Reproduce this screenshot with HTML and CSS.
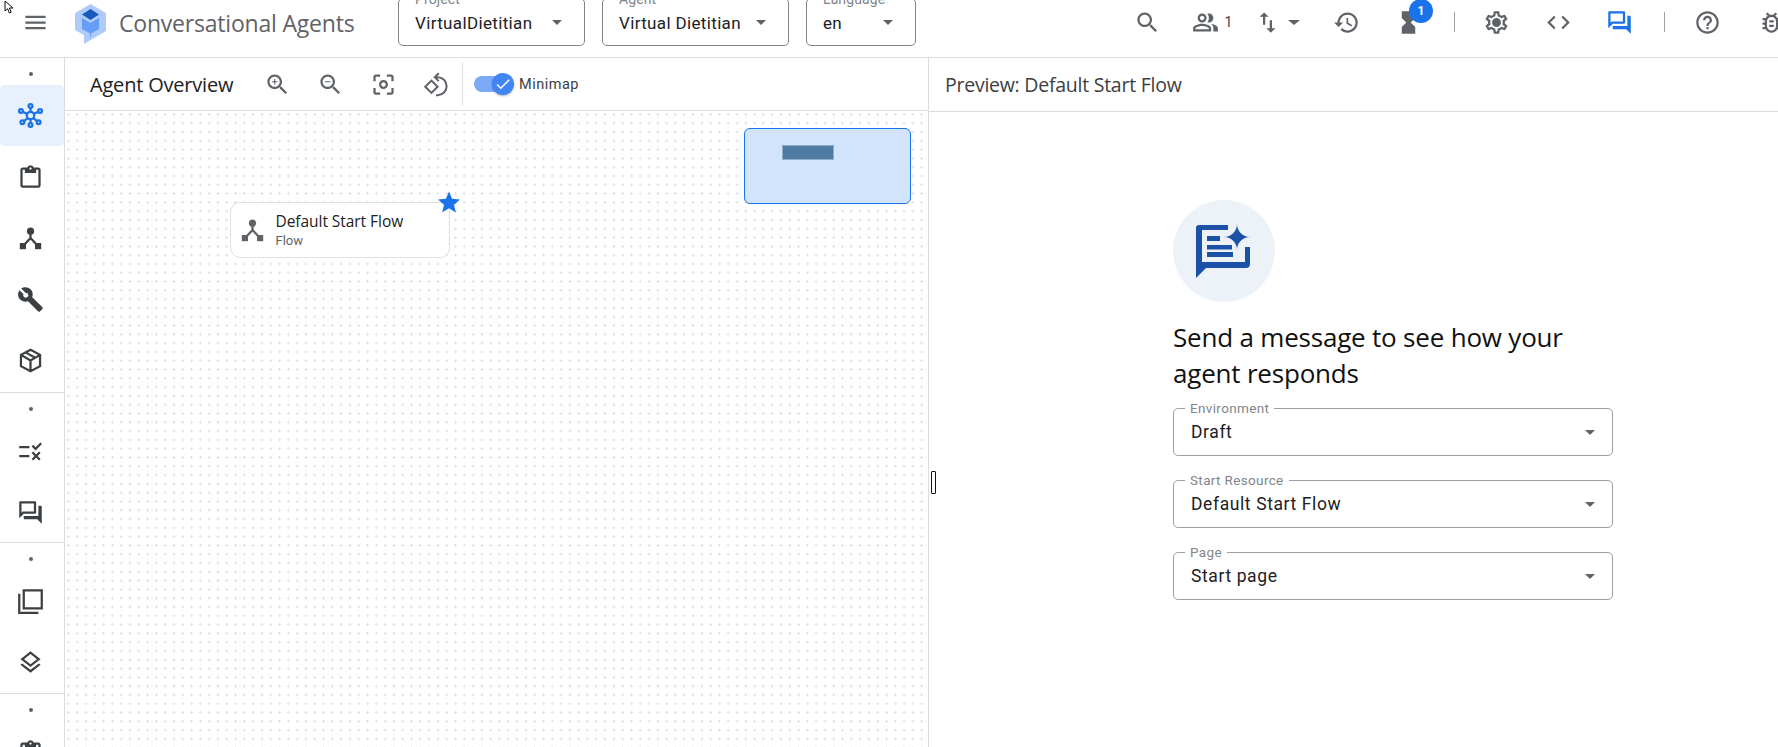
FILE: index.html
```html
<!DOCTYPE html>
<html lang="en">
<head>
    <meta charset="UTF-8">
    <title>Conversational Agents</title>
    <link rel="stylesheet" href="styles.css">
</head>
<body>
    <svg class="sprite" width="0" height="0">
        <symbol id="i-forum" viewBox="0 0 24 24"><path d="M15 4v7H5.170L4 12.170V4h11m1-2H3c-.55 0-1 .45-1 1v14l4-4h10c.55 0 1-.45 1-1V3c0-.55-.45-1-1-1zm5 4h-2v9H6v2c0 .55.45 1 1 1h11l4 4V7c0-.55-.45-1-1-1z"/></symbol>
        <symbol id="i-flow" viewBox="0 0 24 24"><circle cx="12" cy="5.500" r="3.200"/><rect x="2.500" y="16" width="5.500" height="5.500"/><rect x="16" y="16" width="5.500" height="5.500"/><path d="M12 7v4.500L6 18M12 11.500l6 6.500" fill="none" stroke="currentColor" stroke-width="2"/></symbol>
        <symbol id="i-clip" viewBox="0 0 24 24"><path d="M19 3h-4.180C14.400 1.840 13.300 1 12 1c-1.300 0-2.400.84-2.820 2H5c-1.100 0-2 .9-2 2v14c0 1.100.9 2 2 2h14c1.100 0 2-.9 2-2V5c0-1.100-.9-2-2-2zm-7 0c.55 0 1 .45 1 1s-.45 1-1 1-1-.45-1-1 .45-1 1-1zm7 16H5V5h2v3h10V5h2v14z"/></symbol>
    </svg>

    <svg class="cursor" width="12" height="14" viewBox="0 0 12 14"><path d="M1 1v10l2.600-2.300L5.400 13l1.800-.8-1.800-4.200H9z" fill="#fff" stroke="#111" stroke-width="1"/></svg>

    <header class="topbar">
        <svg class="icon menu-icon" viewBox="0 0 24 24"><path d="M3 18h18v-2H3v2zm0-5h18v-2H3v2zm0-7v2h18V6H3z"/></svg>
        <svg class="logo" width="31" height="40" viewBox="0 0 31 40">
            <path d="M15.500 0L31 9v18L9 40v-9l-9-5V9z" fill="#aecbfa"/>
            <path d="M7 14l8.500 5L24 14v11l-8 4.500V33l-1-.5v-3L7 25z" fill="#669df6"/>
            <path d="M15.500 5L24 10.500 15.500 16 7 10.500z" fill="#185abc"/>
        </svg>
        <span class="product">Conversational Agents</span>

        <div class="picker picker-project">
            <span class="picker-label">Project</span>
            <span class="picker-value">VirtualDietitian</span>
            <span class="caret"></span>
        </div>
        <div class="picker picker-agent">
            <span class="picker-label">Agent</span>
            <span class="picker-value">Virtual Dietitian</span>
            <span class="caret"></span>
        </div>
        <div class="picker picker-lang">
            <span class="picker-label">Language</span>
            <span class="picker-value">en</span>
            <span class="caret"></span>
        </div>

        <div class="tools">
            <svg class="icon" viewBox="0 0 24 24"><path d="M15.500 14h-.79l-.28-.27C15.410 12.590 16 11.110 16 9.500 16 5.910 13.090 3 9.500 3S3 5.910 3 9.500 5.910 16 9.500 16c1.610 0 3.090-.59 4.230-1.570l.27.280v.79l5 4.990L20.490 19l-4.990-5zm-6 0C7.010 14 5 11.990 5 9.500S7.010 5 9.500 5 14 7.010 14 9.500 11.990 14 9.500 14z"/></svg>
            <svg class="icon tool-people" viewBox="0 0 24 24"><path d="M16.670 13.130C18.040 14.060 19 15.320 19 17v3h4v-3c0-2.180-3.570-3.470-6.330-3.870zM15 12c2.210 0 4-1.790 4-4s-1.790-4-4-4c-.47 0-.91.100-1.330.240C14.500 5.270 15 6.580 15 8s-.5 2.730-1.330 3.760c.42.140.86.240 1.330.240zM9 12c2.210 0 4-1.790 4-4s-1.790-4-4-4-4 1.790-4 4 1.790 4 4 4zm0-6c1.100 0 2 .9 2 2s-.9 2-2 2-2-.9-2-2 .9-2 2-2zM9 13c-2.670 0-8 1.340-8 4v3h16v-3c0-2.660-5.330-4-8-4zm6 5H3v-.99C3.200 16.290 6.300 15 9 15s5.800 1.290 6 2v1z"/></svg>
            <span class="people-count">1</span>
            <svg class="icon tool-swap" viewBox="0 0 24 24"><path d="M16 17.010V10h-2v7.010h-3L15 21l4-3.990h-3zM9 3L5 6.990h3V14h2V6.990h3L9 3z"/></svg>
            <span class="caret tool-caret"></span>
            <svg class="icon tool-history" viewBox="0 0 24 24"><path d="M13 3c-4.970 0-9 4.030-9 9H1l3.890 3.890.07.140L9 12H6c0-3.870 3.130-7 7-7s7 3.130 7 7-3.130 7-7 7c-1.930 0-3.680-.79-4.940-2.060l-1.420 1.420C8.270 19.990 10.510 21 13 21c4.970 0 9-4.030 9-9s-4.030-9-9-9zm-1 5v5l4.280 2.540.72-1.210-3.500-2.080V8H12z"/></svg>
            <div class="hourglass">
                <svg class="icon" viewBox="0 0 24 24"><path d="M6 2v6h.01L6 8.010 10 12l-4 4 .01.01H6V22h12v-5.990h-.01L18 16l-4-4 4-3.990-.01-.01H18V2H6z"/></svg>
                <span class="badge">1</span>
            </div>
            <span class="tool-sep sep-a"></span>
            <svg class="icon tool-gear" viewBox="0 0 24 24"><path d="M19.430 12.980c.04-.32.07-.64.07-.98 0-.34-.03-.66-.07-.98l2.110-1.650c.19-.15.24-.42.12-.64l-2-3.460c-.09-.16-.26-.25-.44-.25-.06 0-.12.01-.17.03l-2.490 1c-.52-.4-1.080-.73-1.690-.98l-.38-2.650C14.460 2.180 14.250 2 14 2h-4c-.25 0-.46.18-.49.42l-.38 2.650c-.61.25-1.170.59-1.690.98l-2.490-1c-.06-.02-.12-.03-.18-.03-.17 0-.34.09-.43.25l-2 3.460c-.13.22-.07.49.12.64l2.110 1.650c-.04.32-.07.65-.07.98 0 .33.03.66.07.98l-2.110 1.650c-.19.15-.24.42-.12.64l2 3.460c.09.16.26.25.44.25.06 0 .12-.01.17-.03l2.490-1c.52.4 1.080.73 1.690.98l.38 2.650c.03.24.24.42.49.42h4c.25 0 .46-.18.49-.42l.38-2.650c.61-.25 1.170-.59 1.690-.98l2.490 1c.06.02.12.03.18.03.17 0 .34-.09.43-.25l2-3.460c.12-.22.07-.49-.12-.64l-2.110-1.650zm-1.980-1.710c.04.31.05.52.05.73 0 .21-.02.43-.05.73l-.14 1.130.89.7 1.080.84-.7 1.210-1.270-.51-1.040-.42-.9.68c-.43.32-.84.56-1.250.73l-1.060.43-.16 1.130-.2 1.350h-1.400l-.19-1.350-.16-1.130-1.060-.43c-.43-.18-.83-.41-1.230-.71l-.91-.7-1.060.43-1.270.51-.7-1.210 1.080-.84.89-.7-.14-1.130c-.03-.31-.05-.54-.05-.74s.02-.43.05-.73l.14-1.130-.89-.7-1.080-.84.7-1.210 1.270.51 1.040.42.9-.68c.43-.32.84-.56 1.250-.73l1.060-.43.16-1.130.2-1.350h1.390l.19 1.350.16 1.130 1.060.43c.43.18.83.41 1.230.71l.91.7 1.060-.43 1.270-.51.7 1.210-1.070.85-.89.7.14 1.130zM12 8c-2.210 0-4 1.790-4 4s1.790 4 4 4 4-1.790 4-4-1.790-4-4-4z"/></svg>
            <svg class="icon tool-code" viewBox="0 0 24 24"><path d="M9.400 16.600L4.800 12l4.600-4.600L8 6l-6 6 6 6 1.400-1.400zm5.200 0l4.600-4.600-4.600-4.600L16 6l6 6-6 6-1.400-1.400z"/></svg>
            <svg class="icon tool-forum"><use href="#i-forum"/></svg>
            <span class="tool-sep sep-b"></span>
            <svg class="icon tool-help" viewBox="0 0 24 24"><path d="M11 18h2v-2h-2v2zm1-16C6.480 2 2 6.480 2 12s4.480 10 10 10 10-4.480 10-10S17.520 2 12 2zm0 18c-4.410 0-8-3.590-8-8s3.590-8 8-8 8 3.590 8 8-3.590 8-8 8zm0-14c-2.210 0-4 1.790-4 4h2c0-1.100.9-2 2-2s2 .9 2 2c0 2-3 1.750-3 5h2c0-2.250 3-2.500 3-5 0-2.210-1.790-4-4-4z"/></svg>
            <svg class="icon tool-bug" viewBox="0 0 24 24"><path d="M20 8h-2.810c-.45-.78-1.070-1.450-1.820-1.960L17 4.410 15.590 3l-2.170 2.170C12.960 5.060 12.490 5 12 5s-.96.06-1.410.17L8.410 3 7 4.410l1.620 1.630C7.880 6.550 7.260 7.220 6.810 8H4v2h2.090c-.05.33-.09.66-.09 1v1H4v2h2v1c0 .34.04.67.09 1H4v2h2.810c1.040 1.790 2.970 3 5.190 3s4.150-1.210 5.190-3H20v-2h-2.090c.05-.33.09-.66.09-1v-1h2v-2h-2v-1c0-.34-.04-.67-.09-1H20V8zm-4 7c0 2.210-1.790 4-4 4s-4-1.790-4-4v-4c0-2.210 1.790-4 4-4s4 1.790 4 4v4zM10 14h4v2h-4zm0-4h4v2h-4z"/></svg>
        </div>
    </header>

    <div class="main">
        <nav class="rail">
            <div class="rail-group rail-first">
                <span class="rail-dot"></span>
                <div class="rail-item active">
                    <svg class="icon" viewBox="0 0 24 24" fill="none" stroke="currentColor" stroke-width="2"><circle cx="12" cy="12" r="3.300"/><circle cx="12" cy="3.500" r="1.700"/><circle cx="12" cy="20.500" r="1.700"/><circle cx="3.500" cy="8" r="1.700"/><circle cx="20.500" cy="8" r="1.700"/><circle cx="4.800" cy="18" r="1.700"/><circle cx="19.200" cy="18" r="1.700"/><path d="M12 5.200v3.500M12 15.300v3.500M5 8.800l4 1.700M19 8.800l-4 1.700M6.200 17l3.200-2.700M17.800 17l-3.200-2.700"/></svg>
                </div>
                <div class="rail-item"><svg class="icon"><use href="#i-clip"/></svg></div>
                <div class="rail-item"><svg class="icon"><use href="#i-flow"/></svg></div>
                <div class="rail-item">
                    <svg class="icon" viewBox="0 0 24 24"><path d="M22.610 18.990l-9.080-9.080c.93-2.340.45-5.100-1.440-7C9.790.61 6.210.4 3.660 2.260L7.500 6.110 6.080 7.520 2.250 3.690C.39 6.230.6 9.820 2.900 12.110c1.860 1.860 4.570 2.350 6.890 1.480l9.110 9.110c.39.39 1.020.39 1.410 0l2.300-2.300c.4-.38.4-1.010 0-1.410z"/><circle cx="7.800" cy="8.200" r="2.200" fill="#fff"/></svg>
                </div>
                <div class="rail-item">
                    <svg class="icon" viewBox="0 0 24 24" fill="none" stroke="currentColor" stroke-width="2"><path d="M12 2.500L20.500 7v10L12 21.500 3.500 17V7zM3.500 7l8.500 5 8.500-5M12 12v9.500M8 5l8.500 4.800"/></svg>
                </div>
            </div>
            <div class="rail-group rail-mid">
                <span class="rail-dot"></span>
                <div class="rail-item">
                    <svg class="icon" viewBox="0 0 24 24"><path d="M16.540 11L13 7.460l1.410-1.410 2.120 2.120 4.240-4.240 1.410 1.410L16.540 11zM11 7H2v2h9V7zm10 6.410L19.590 12 17 14.590 14.410 12 13 13.410 15.590 16 13 18.590 14.410 20 17 17.410 19.590 20 21 18.590 18.410 16 21 13.410zM11 15H2v2h9v-2z"/></svg>
                </div>
                <div class="rail-item"><svg class="icon"><use href="#i-forum"/></svg></div>
            </div>
            <div class="rail-group">
                <span class="rail-dot"></span>
                <div class="rail-item">
                    <svg class="icon" viewBox="0 0 24 24"><path d="M3 5H1v18h18v-2H3V5zm20-4H5v18h18V1zm-2 16H7V3h14v14z"/></svg>
                </div>
                <div class="rail-item">
                    <svg class="icon" viewBox="0 0 24 24"><path d="M11.990 18.540l-7.370-5.730L3 14.070l9 7 9-7-1.630-1.270zM12 16l7.360-5.730L21 9l-9-7-9 7 1.630 1.270L12 16zm0-11.470L17.740 9 12 13.470 6.260 9 12 4.530z"/></svg>
                </div>
            </div>
            <div class="rail-group rail-last">
                <span class="rail-dot"></span>
                <div class="rail-item"><svg class="icon"><use href="#i-clip"/></svg></div>
            </div>
        </nav>

        <section class="overview">
            <div class="toolbar">
                <h1 class="overview-title">Agent Overview</h1>
                <svg class="icon tb-icon tb-first" viewBox="0 0 24 24"><path d="M15.500 14h-.79l-.28-.27C15.410 12.590 16 11.110 16 9.500 16 5.910 13.090 3 9.500 3S3 5.910 3 9.500 5.910 16 9.500 16c1.610 0 3.090-.59 4.230-1.570l.27.280v.79l5 4.990L20.490 19l-4.990-5zm-6 0C7.010 14 5 11.990 5 9.500S7.010 5 9.500 5 14 7.010 14 9.500 11.990 14 9.500 14zM12 10h-2v2H9v-2H7V9h2V7h1v2h2v1z"/></svg>
                <svg class="icon tb-icon" viewBox="0 0 24 24"><path d="M15.500 14h-.79l-.28-.27C15.410 12.590 16 11.110 16 9.500 16 5.910 13.090 3 9.500 3S3 5.910 3 9.500 5.910 16 9.500 16c1.610 0 3.090-.59 4.230-1.570l.27.280v.79l5 4.990L20.490 19l-4.990-5zm-6 0C7.010 14 5 11.990 5 9.500S7.010 5 9.500 5 14 7.010 14 9.500 11.990 14 9.500 14zM7 9h5v1H7z"/></svg>
                <svg class="icon tb-icon" viewBox="0 0 24 24"><path d="M5 15H3v4c0 1.100.9 2 2 2h4v-2H5v-4zM5 5h4V3H5c-1.100 0-2 .9-2 2v4h2V5zm14-2h-4v2h4v4h2V5c0-1.100-.9-2-2-2zm0 16h-4v2h4c1.100 0 2-.9 2-2v-4h-2v4zM12 8c-2.210 0-4 1.790-4 4s1.790 4 4 4 4-1.790 4-4-1.790-4-4-4zm0 6c-1.100 0-2-.9-2-2s.9-2 2-2 2 .9 2 2-.9 2-2 2z"/></svg>
                <svg class="icon tb-icon" viewBox="0 0 24 24" fill="none" stroke="currentColor" stroke-width="1.800"><path d="M2 14l5.500-5.500L13 14l-5.500 5.500zM10.500 5.500H13a8 8 0 1 1 0 16h-1.500"/><path d="M14 2l-3.500 3.500L14 9"/></svg>
                <span class="toolbar-sep"></span>
                <div class="toggle"><span class="toggle-track"></span><span class="toggle-thumb"><svg width="18" height="18" viewBox="0 0 24 24"><path d="M9 16.200L4.800 12l-1.400 1.400L9 19 21 7l-1.400-1.400z" fill="#fff"/></svg></span></div>
                <span class="toggle-label">Minimap</span>
            </div>
            <div class="canvas">
                <div class="minimap"><span class="minimap-node"></span></div>
                <div class="flow-node">
                    <svg class="icon node-icon"><use href="#i-flow"/></svg>
                    <div class="node-text">
                        <span class="node-title">Default Start Flow</span>
                        <span class="node-sub">Flow</span>
                    </div>
                    <svg class="node-star" width="24" height="24" viewBox="0 0 24 24"><path d="M12 1.500l3.100 7.300 7.900.7-6 5.200 1.800 7.800L12 18.300l-6.800 4.200L7 14.700l-6-5.200 7.900-.7z" fill="#1a73e8"/></svg>
                </div>
            </div>
        </section>

        <section class="preview">
            <span class="drag-handle"></span>
            <div class="preview-head">Preview: Default Start Flow</div>
            <div class="preview-body">
                <div class="hero">
                    <svg width="56" height="58" viewBox="0 -3 56 58">
                        <path d="M0 3Q0 0 3 0H32V5H6V37H49V22H54V39Q54 43 50 43H10L0 53Z" fill="#1b52a8"/>
                        <path d="M11 11H24V16H11ZM11 20H36V24.500H11ZM11 27H37V32H11Z" fill="#1b52a8"/>
                        <path d="M41-2C42 7 46 11 55 12 46 13 42 17 41 26 40 17 36 13 27 12 36 11 40 7 41-2Z" fill="#1b52a8" stroke="#edf2f8" stroke-width=".8"/>
                    </svg>
                </div>
                <h2 class="hero-text">Send a message to see how your agent responds</h2>
                <div class="field">
                    <span class="field-label">Environment</span>
                    <span class="field-value">Draft</span>
                    <span class="caret"></span>
                </div>
                <div class="field">
                    <span class="field-label">Start Resource</span>
                    <span class="field-value">Default Start Flow</span>
                    <span class="caret"></span>
                </div>
                <div class="field">
                    <span class="field-label">Page</span>
                    <span class="field-value">Start page</span>
                    <span class="caret"></span>
                </div>
            </div>
        </section>
    </div>
</body>
</html>
```

FILE: styles.css
```css
* {
    box-sizing: border-box;
}

html, body {
    margin: 0;
    height: 747px;
    overflow: hidden;
}

body {
    font-family: 'Roboto', sans-serif;
    background: #fff;
    color: #202124;
    position: relative;
}

.sprite {
    position: absolute;
}

.cursor {
    position: absolute;
    left: 4px;
    top: 0;
    z-index: 5;
}

.icon {
    width: 27px;
    height: 27px;
    flex: none;
    fill: #5f6368;
    color: #5f6368;
    display: block;
}

.icon[fill="none"] {
    fill: none;
}

/* top bar */
.topbar {
    height: 58px;
    display: flex;
    align-items: flex-start;
    border-bottom: 1px solid #dadce0;
    width: 1778px;
    overflow: hidden;
}

.menu-icon {
    margin: 9px 0 0 22px;
}

.logo {
    flex: none;
    margin: 4px 0 0 26px;
}

.product {
    flex: none;
    width: 255px;
    margin: 8px 0 0 13px;
    font-family: 'Open Sans', sans-serif;
    font-size: 23px;
    line-height: 30px;
    letter-spacing: -0.2px;
    color: #5f6368;
}

.picker {
    position: relative;
    flex: none;
    height: 48px;
    margin-top: -2px;
    border: 1px solid #80868b;
    border-radius: 5px;
    display: flex;
    align-items: center;
    padding: 1px 0 0 16px;
}

.picker-project {
    width: 187px;
    margin-left: 24px;
}

.picker-agent {
    width: 187px;
    margin-left: 17px;
}

.picker-lang {
    width: 110px;
    margin-left: 17px;
}

.picker-label {
    position: absolute;
    left: 11px;
    top: -8px;
    padding: 0 5px;
    background: #fff;
    font-size: 14px;
    line-height: 16px;
    color: #80868b;
    letter-spacing: 0.1px;
}

.picker-value {
    font-size: 17px;
    letter-spacing: 0.35px;
    color: #202124;
}

.caret {
    flex: none;
    width: 0;
    height: 0;
    border-left: 5px solid transparent;
    border-right: 5px solid transparent;
    border-top: 5px solid #5f6368;
    margin-left: auto;
    margin-right: 22px;
}

.tools {
    display: flex;
    align-items: center;
    height: 44px;
    margin-left: 217.5px;
    flex: none;
}

.tool-people { margin-left: 31.5px; }
.tool-swap { margin-left: 19.5px; }
.tool-caret { margin: 0 0 0 6.5px; border-left-width: 6px; border-right-width: 6px; }
.tool-history { margin-left: 33.5px; }
.hourglass { margin-left: 35px; position: relative; }
.tool-gear { margin-left: 28.5px; }
.tool-code { margin-left: 35px; }
.tool-forum { margin-left: 34px; fill: #1a73e8; }
.tool-help { margin-left: 29.5px; }
.tool-bug { margin-left: 36.5px; }

.people-count {
    margin-left: 5.5px;
    font-size: 14px;
    color: #3c4043;
    width: 10px;
}

.badge {
    position: absolute;
    left: 14px;
    top: -10px;
    width: 24px;
    height: 24px;
    border-radius: 50%;
    background: #1a73e8;
    color: #fff;
    font-size: 12px;
    font-weight: 700;
    display: flex;
    align-items: center;
    justify-content: center;
}

.tool-sep {
    width: 1px;
    height: 20px;
    background: #9aa0a6;
    flex: none;
}

.sep-a { margin-left: 31.5px; }
.sep-b { margin-left: 30.5px; }

/* main area */
.main {
    display: flex;
    height: 689px;
}

.rail {
    width: 65px;
    flex: none;
    border-right: 1px solid #dadce0;
    overflow: hidden;
}

.rail-group {
    border-bottom: 1px solid #dadce0;
}

.rail-first {
    padding-bottom: 2px;
}

.rail-first .rail-dot {
    margin-bottom: 23px;
}

.rail-first .rail-item {
    padding-top: 2px;
}

.rail-mid {
    height: 150px;
}

.rail-last {
    border-bottom: 0;
}

.rail-dot {
    display: block;
    width: 4px;
    height: 4px;
    border-radius: 50%;
    background: #5f6368;
    margin: 0 auto 24px;
    position: relative;
    top: 14px;
    left: -1px;
}

.rail-item {
    height: 61px;
    display: flex;
    align-items: center;
    justify-content: center;
    border-radius: 5px;
    padding-right: 3px;
}

.rail-item .icon {
    fill: #3c4043;
    color: #3c4043;
}

.rail-item .icon[fill="none"] {
    fill: none;
}

.rail-item.active {
    background: #e8f0fe;
    padding-top: 0;
}

.rail-item.active .icon {
    color: #1a73e8;
}

.overview {
    width: 864px;
    flex: none;
    border-right: 1px solid #dadce0;
    display: flex;
    flex-direction: column;
}

.toolbar {
    height: 53px;
    flex: none;
    display: flex;
    align-items: center;
    border-bottom: 1px solid #dadce0;
    padding-left: 25px;
}

.overview-title {
    margin: 0;
    width: 149px;
    flex: none;
    font-family: 'Open Sans', sans-serif;
    font-size: 20px;
    font-weight: 400;
    letter-spacing: -0.2px;
    white-space: nowrap;
    color: #202124;
}

.tb-icon {
    margin-left: 26px;
}

.tb-first {
    margin-left: 24.5px;
}

.toolbar-sep {
    width: 1px;
    height: 44px;
    background: #e0e0e0;
    margin-left: 12.5px;
}

.toggle {
    position: relative;
    width: 40px;
    height: 24px;
    margin-left: 11px;
    flex: none;
}

.toggle-track {
    position: absolute;
    left: 0;
    top: 4px;
    width: 32px;
    height: 16px;
    border-radius: 8px;
    background: #7baaf7;
}

.toggle-thumb {
    position: absolute;
    left: 18px;
    top: 1px;
    width: 22px;
    height: 22px;
    border-radius: 50%;
    background: #4285f4;
    box-shadow: 0 1px 2px rgba(0, 0, 0, .3);
    display: flex;
    align-items: center;
    justify-content: center;
}

.toggle-label {
    margin-left: 5px;
    font-size: 14.5px;
    letter-spacing: 0.5px;
    color: #3c4043;
}

.canvas {
    position: relative;
    flex: 1;
    background-color: #fff;
    background-image: radial-gradient(circle, #e0e0e0 1px, transparent 1.2px);
    background-size: 8.8px 8.8px;
    background-position: -1px -1px;
}

.minimap {
    position: absolute;
    left: 679px;
    top: 17px;
    width: 167px;
    height: 76px;
    border: 1px solid #1a73e8;
    border-radius: 6px;
    background: #d2e3fc;
}

.minimap-node {
    position: absolute;
    left: 38px;
    top: 17px;
    width: 50px;
    height: 13px;
    background: #4f7ba3;
    outline: 1px solid #8eacc9;
}

.flow-node {
    position: absolute;
    left: 165px;
    top: 91px;
    width: 220px;
    height: 56px;
    background: #fff;
    border: 1px solid #e0e0e0;
    border-radius: 10px;
    display: flex;
    align-items: center;
    padding-left: 8px;
}

.node-icon {
    margin-right: 9.5px;
}

.node-text {
    display: flex;
    flex-direction: column;
}

.node-title {
    font-family: 'Open Sans', sans-serif;
    font-size: 15.500px;
    font-weight: 500;
    line-height: 20px;
    margin-bottom: 1px;
    letter-spacing: -0.05px;
    color: #202124;
}

.node-sub {
    font-size: 13px;
    line-height: 17px;
    color: #5f6368;
}

.node-star {
    position: absolute;
    right: -12px;
    top: -13px;
}

.preview {
    position: relative;
    flex: 1;
}

.drag-handle {
    position: absolute;
    left: 2px;
    top: 413px;
    width: 5px;
    height: 23px;
    border: 1px solid #111;
    border-radius: 1px;
    background: #fff;
}

.preview-head {
    height: 54px;
    display: flex;
    align-items: center;
    padding-left: 16px;
    border-bottom: 1px solid #dadce0;
    font-family: 'Open Sans', sans-serif;
    font-size: 19.500px;
    letter-spacing: -0.25px;
    color: #3c4043;
}

.preview-body {
    width: 440px;
    margin-left: 244px;
    padding-top: 88px;
}

.hero {
    width: 102px;
    height: 102px;
    border-radius: 50%;
    background: #edf2f8;
    display: flex;
    align-items: center;
    justify-content: center;
}

.hero-text {
    margin: 17px 0 17px;
    font-family: 'Open Sans', sans-serif;
    font-size: 26px;
    font-weight: 400;
    line-height: 36px;
    letter-spacing: -0.2px;
    color: #111;
}

.field {
    position: relative;
    height: 48px;
    margin-bottom: 24px;
    border: 1px solid #9aa0a6;
    border-radius: 5px;
    display: flex;
    align-items: center;
    padding: 0 0 0 17px;
}

.field-label {
    position: absolute;
    left: 11px;
    top: -8px;
    padding: 0 5px;
    background: #fff;
    font-size: 13.500px;
    line-height: 15px;
    letter-spacing: 0.35px;
    color: #80868b;
}

.field-value {
    font-size: 17.500px;
    letter-spacing: 0.6px;
    color: #202124;
}

.field .caret {
    margin-right: 17px;
}
```
